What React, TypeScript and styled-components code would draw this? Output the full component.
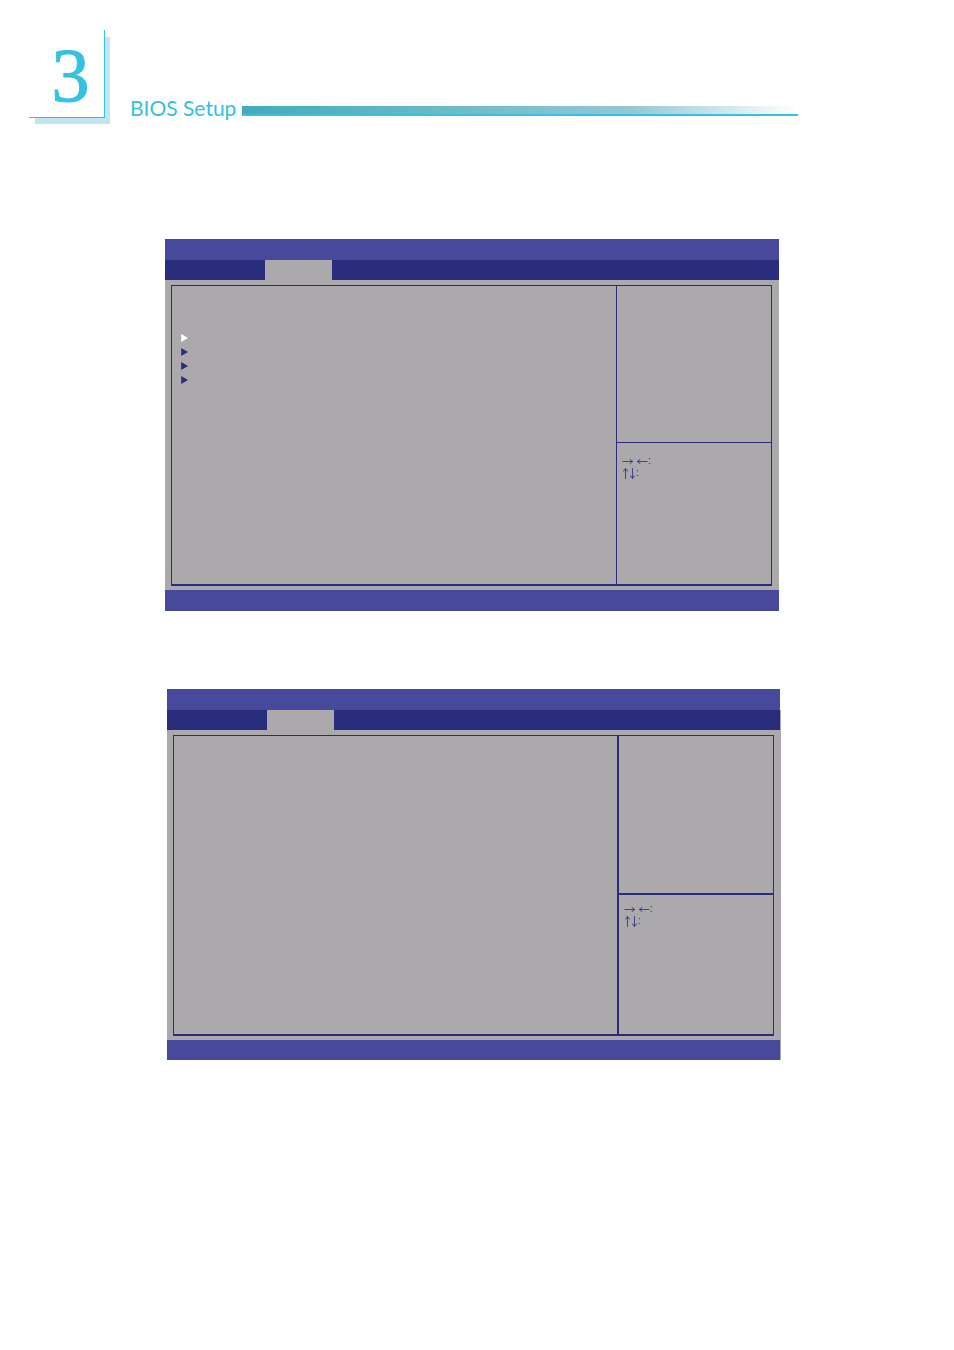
import React from "react";
import styled, { createGlobalStyle } from "styled-components";

const navy = "#2a2c7c";
const violet = "#48489d";
const gray = "#aba9ac";
const cyan = "#35c1df";

const GlobalStyle = createGlobalStyle`
  * { box-sizing: border-box; }
  body { margin: 0; background: #fff; }
`;

const Page = styled.div`
  min-height: 100vh;
  padding-bottom: 40px;
`;

const Header = styled.header`
  display: flex;
  align-items: flex-start;
  padding: 30px 156px 0 29px;
`;

const Chapter = styled.div`
  flex: none;
  width: 76px;
  height: 88px;
  padding-left: 8px;
  background: #fff;
  border-right: 1px solid ${cyan};
  border-bottom: 1px solid ${cyan};
  box-shadow: 5px 6px 0 #c0e6ef;
  clip-path: polygon(0 0, 76px 0, 76px 7px, 120px 7px, 120px 120px, 6px 120px, 6px 88px, 0 88px);
  color: ${cyan};
  font: 76px/90px "Liberation Serif", serif;
  -webkit-text-stroke: 1px ${cyan};
  text-align: center;
`;

const Title = styled.h1`
  flex: none;
  width: 112px;
  margin: 64px 0 0 25px;
  color: ${cyan};
  font: 400 21px/28px Lato, sans-serif;
  white-space: nowrap;
`;

const Rule = styled.div`
  flex: 1;
  height: 10px;
  margin-top: 76px;
  border-bottom: 2px solid ${cyan};
  background: linear-gradient(to right, #42abba, #92c8d5 70%, #fff);
`;

const Main = styled.main`
  display: flex;
  flex-direction: column;
  gap: 78px;
  padding: 117px 173px 0 165px;
`;

const Screen = styled.section<{ $shifted?: boolean }>`
  margin-left: ${(p) => (p.$shifted ? 2 : 0)}px;
  margin-right: ${(p) => (p.$shifted ? 0 : 2)}px;
`;

const Bar = styled.div<{ $height: number; $edge?: string }>`
  height: ${(p) => p.$height}px;
  background: ${violet};
  border-right: ${(p) => (p.$edge ? `1px solid ${p.$edge}` : "none")};
`;

const Tabs = styled.div<{ $edge?: string }>`
  display: flex;
  height: 20px;
  padding-left: 100px;
  background: ${navy};
  border-right: ${(p) => (p.$edge ? `1px solid ${p.$edge}` : "none")};
`;

const ActiveTab = styled.div`
  width: 67px;
  background: ${gray};
`;

const Body = styled.div`
  display: flex;
  height: 310px;
  padding: 5px 7px 4px 6px;
  background: ${gray};
`;

const Frame = styled.div`
  flex: 1;
  display: flex;
  border: 1px solid ${navy};
  border-bottom-width: 2px;
`;

const Options = styled.ul`
  flex: 1;
  display: flex;
  flex-direction: column;
  margin: 0;
  padding: 45px 0 0 9px;
  list-style: none;
`;

const Option = styled.li<{ $selected?: boolean }>`
  display: flex;
  align-items: center;
  height: 14px;
  color: ${(p) => (p.$selected ? "#fff" : navy)};
`;

const Side = styled.aside<{ $line: number }>`
  box-sizing: content-box;
  width: 154px;
  border-left: ${(p) => p.$line}px solid ${navy};
`;

const Help = styled.div<{ $line: number }>`
  box-sizing: content-box;
  height: ${(p) => 155 + p.$line}px;
  border-bottom: ${(p) => p.$line}px solid ${navy};
`;

const Keys = styled.div<{ $top: number }>`
  padding: ${(p) => p.$top}px 0 0 5px;
  color: ${navy};
`;

const Key = styled.div<{ $gap: number }>`
  display: flex;
  align-items: center;
  height: 12px;
  font: 10px/12px "Liberation Sans", sans-serif;

  svg + svg {
    margin-left: ${(p) => p.$gap}px;
  }
`;

function Marker() {
  return (
    <svg width="7" height="8" viewBox="0 0 7 8" aria-hidden="true">
      <path d="M0.2 0 7 4 0.2 8Z" fill="currentColor" />
    </svg>
  );
}

const arrowPaths = {
  right: "M0.5 5.5H10.5M8 3Q8.6 4.9 10.8 5.5Q8.6 6.1 8 8",
  left: "M10.5 5.5H0.5M3 3Q2.4 4.9 0.2 5.5Q2.4 6.1 3 8",
  up: "M3.5 11V0.8M1 3.2Q2.9 2.6 3.5 0.4Q4.1 2.6 6 3.2",
  down: "M3.5 0V10.2M1 7.8Q2.9 8.4 3.5 10.6Q4.1 8.4 6 7.8",
};

function Arrow({ to }: { to: keyof typeof arrowPaths }) {
  const width = to === "left" || to === "right" ? 11 : 7;
  return (
    <svg width={width} height="11" viewBox={`0 0 ${width} 11`} role="img" aria-label={`${to} arrow`}>
      <path d={arrowPaths[to]} fill="none" stroke="currentColor" strokeWidth="0.8" />
    </svg>
  );
}

type BiosProps = { options: number; line: number; footer: number; shifted?: boolean };

function BiosScreen({ options, line, footer, shifted }: BiosProps) {
  return (
    <Screen $shifted={shifted}>
      <Bar $height={21} $edge={shifted ? "#fff" : undefined} />
      <Tabs $edge={shifted ? gray : undefined}>
        <ActiveTab />
      </Tabs>
      <Body>
        <Frame>
          <Options>
            {Array.from({ length: options }, (_, i) => (
              <Option key={i} $selected={i === 0}>
                <Marker />
              </Option>
            ))}
          </Options>
          <Side $line={line}>
            <Help $line={line} />
            <Keys $top={shifted ? 8 : 12}>
              <Key $gap={4}>
                <Arrow to="right" />
                <Arrow to="left" />:
              </Key>
              <Key $gap={0}>
                <Arrow to="up" />
                <Arrow to="down" />:
              </Key>
            </Keys>
          </Side>
        </Frame>
      </Body>
      <Bar $height={footer} $edge={shifted ? gray : undefined} />
    </Screen>
  );
}

export default function App() {
  return (
    <Page>
      <GlobalStyle />
      <Header>
        <Chapter>3</Chapter>
        <Title>BIOS Setup</Title>
        <Rule />
      </Header>
      <Main>
        <BiosScreen options={4} line={1} footer={21} />
        <BiosScreen options={0} line={2} footer={20} shifted />
      </Main>
    </Page>
  );
}
